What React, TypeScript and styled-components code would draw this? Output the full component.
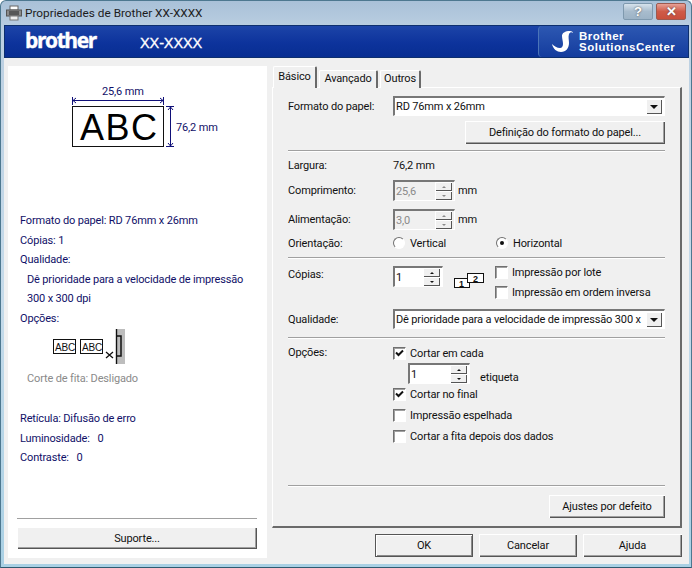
import React from "react";
import styled, { createGlobalStyle } from "styled-components";

const GlobalStyle = createGlobalStyle`
  html, body {
    margin: 0;
    padding: 0;
    background: #fff;
  }
  * {
    box-sizing: border-box;
  }
`;

const Window = styled.div`
  width: 692px;
  height: 568px;
  display: flex;
  flex-direction: column;
  padding: 0 3px 3px;
  overflow: hidden;
  border-radius: 6px 6px 0 0;
  border: 1px solid #4d7890;
  border-bottom-color: #2f5a70;
  background: linear-gradient(#a9c1d8 0, #bcd0e2 30px, #c6dbea 300px, #a9d0e4 100%);
  font-family: Roboto, "Liberation Sans", sans-serif;
  font-size: 11px;
  letter-spacing: -0.15px;
  color: #111;
`;

const TitleBar = styled.div`
  height: 24px;
  flex: none;
  display: flex;
  align-items: center;
  gap: 3px;
  padding: 0 2px;
  font-size: 11.8px;
  letter-spacing: 0;
  color: #1c1c1c;
`;

const TitleText = styled.span`
  flex: 1;
`;

const CaptionButton = styled.div<{ $close?: boolean }>`
  width: 30px;
  height: 17px;
  margin-top: -4px;
  display: flex;
  align-items: center;
  justify-content: center;
  border: 1px solid ${(p) => (p.$close ? "#9c5a50" : "#7f99ae")};
  border-radius: 2px;
  font-family: "Liberation Sans", sans-serif;
  font-weight: 700;
  font-size: 13px;
  color: #fff;
  text-shadow: 0 0 2px #444;
  background: ${(p) =>
    p.$close
      ? "linear-gradient(#e8a196, #cf5b48 50%, #c9503c)"
      : "linear-gradient(#d6e2ec, #a8bccd 50%, #9db3c6)"};
`;

const Banner = styled.div`
  height: 33px;
  flex: none;
  margin: 0 -1px 0 0;
  display: flex;
  align-items: center;
  padding-left: 20px;
  border: 1px solid #0d2f6e;
  background: linear-gradient(#1c44a8, #0d339c 55%, #082e92);
  color: #fff;
`;

const Logo = styled.span`
  width: 94px;
  margin-top: -3px;
  font-family: "Open Sans", sans-serif;
  font-weight: 700;
  font-size: 21px;
  letter-spacing: -1.4px;
  -webkit-text-stroke: 0.4px #fff;
`;

const Model = styled.span`
  flex: 1;
  padding: 2px 0 0 21px;
  font-family: "Liberation Sans", sans-serif;
  font-size: 14.5px;
  letter-spacing: -0.1px;
  -webkit-text-stroke: 0.3px #fff;
`;

const SolutionsLink = styled.div`
  width: 150px;
  height: 31px;
  display: flex;
  align-items: center;
  gap: 4px;
  padding-left: 11px;
  border-left: 1px solid #4b74b8;
  border-radius: 4px 0 0 4px;
  background: linear-gradient(#2d58b2, #143c9e);
`;

const SolutionsText = styled.div`
  font-family: "Liberation Sans", sans-serif;
  font-weight: 700;
  font-size: 11.5px;
  line-height: 11px;
  letter-spacing: 0.5px;
`;

const Body = styled.div`
  flex: 1;
  min-height: 0;
  display: flex;
  gap: 5px;
  padding: 8px 7px 6px 4px;
  margin-right: -1px;
  background: #f0f0f0;
`;

const Sidebar = styled.aside`
  width: 259px;
  flex: none;
  display: flex;
  flex-direction: column;
  padding: 0 10px 9px 9px;
  background: #fff;
`;

const DiagramWrap = styled.div`
  height: 145px;
  flex: none;
`;

const SummaryLine = styled.div<{ $indent?: boolean; $muted?: boolean }>`
  height: 19.6px;
  line-height: 19.6px;
  padding-left: ${(p) => (p.$muted || p.$indent ? "10px" : "3px")};
  color: ${(p) => (p.$muted ? "#8a8a8a" : "#101068")};
  white-space: pre;
`;

const CutterWrap = styled.div`
  height: 40px;
  padding-left: 35px;
`;

const SummaryGap = styled.div`
  height: 21px;
`;

const SidebarFoot = styled.div`
  margin-top: auto;
  display: flex;
  flex-direction: column;
  gap: 7px;
`;

const Rule = styled.hr<{ $top?: number }>`
  height: 2px;
  width: 100%;
  flex: none;
  margin: ${(p) => p.$top ?? 0}px 0 0;
  border: 0;
  border-top: 1px solid #a0a0a0;
  border-bottom: 1px solid #fff;
`;

const Button = styled.button<{ $width?: number; $default?: boolean; $height?: number }>`
  width: ${(p) => (p.$width ? `${p.$width}px` : "100%")};
  height: ${(p) => p.$height ?? 23}px;
  flex: none;
  padding: 0;
  font: inherit;
  letter-spacing: inherit;
  color: #111;
  background: #f0f0f0;
  border: 0;
  box-shadow: ${(p) =>
    p.$default
      ? "inset 0 0 0 1px #555, inset 2px 2px 0 #fff, inset -2px -2px 0 #8a8a8a"
      : "inset 1px 1px 0 #fff, inset -1px -1px 0 #555, inset -2px -2px 0 #a0a0a0"};
`;

const Main = styled.main`
  flex: 1;
  min-width: 0;
  display: flex;
  flex-direction: column;
`;

const TabStrip = styled.div`
  height: 22px;
  flex: none;
  display: flex;
  align-items: flex-end;
  padding-left: 1px;
  gap: 2px;
  margin-bottom: -1px;
  position: relative;
  z-index: 1;
`;

const Tab = styled.div<{ $active?: boolean; $width: number }>`
  width: ${(p) => p.$width}px;
  height: ${(p) => (p.$active ? 22 : 18)}px;
  line-height: ${(p) => (p.$active ? 19 : 16)}px;
  text-align: center;
  background: #f0f0f0;
  border-left: 1px solid #fff;
  border-top: 1px solid #fff;
  border-right: 2px solid #6a6a6a;
  border-radius: 2px 2px 0 0;
`;

const Pane = styled.section`
  height: 441px;
  flex: none;
  display: flex;
  flex-direction: column;
  padding: 8px 15px 0 15px;
  border-top: 1px solid #fff;
  border-left: 1px solid #fff;
  border-right: 2px solid #6a6a6a;
  border-bottom: 2px solid #6a6a6a;
  background: #f0f0f0;
`;

const Row = styled.div<{ $top?: number; $height?: number; $align?: string }>`
  display: grid;
  grid-template-columns: 105px minmax(0, 1fr);
  align-items: ${(p) => p.$align ?? "center"};
  margin-top: ${(p) => p.$top ?? 0}px;
  height: ${(p) => p.$height ?? 14}px;
  flex: none;
`;

const Inline = styled.div<{ $gap?: number }>`
  display: flex;
  align-items: center;
  gap: ${(p) => p.$gap ?? 3}px;
`;

const Sunken = styled.div<{ $width?: number; $height: number; $disabled?: boolean }>`
  width: ${(p) => (p.$width ? `${p.$width}px` : "100%")};
  height: ${(p) => p.$height}px;
  flex: none;
  display: flex;
  align-items: center;
  padding: 0 2px 0 1px;
  color: ${(p) => (p.$disabled ? "#8a8a8a" : "#111")};
  background: ${(p) => (p.$disabled ? "#f0f0f0" : "#fff")};
  border-top: 2px solid #777;
  border-left: 2px solid #777;
  border-right: 1px solid #fff;
  border-bottom: 1px solid #fff;
`;

const Value = styled.span`
  flex: 1;
  min-width: 0;
  white-space: nowrap;
  overflow: hidden;
`;

const Raised = styled.div`
  display: flex;
  align-items: center;
  justify-content: center;
  background: #f0f0f0;
  box-shadow: inset 1px 1px 0 #fff, inset -1px -1px 0 #555;
`;

const DropButton = styled(Raised)`
  width: 16px;
  height: 15px;
  flex: none;
`;

const SpinColumn = styled.div`
  width: 17px;
  flex: none;
  display: flex;
  flex-direction: column;
  align-self: stretch;
`;

const SpinButton = styled(Raised)`
  flex: 1;
`;

const Arrow = styled.i<{ $up?: boolean; $size?: number; $color?: string }>`
  display: block;
  width: 0;
  height: 0;
  border-left: ${(p) => p.$size ?? 2}px solid transparent;
  border-right: ${(p) => p.$size ?? 2}px solid transparent;
  ${(p) => (p.$up ? "border-bottom" : "border-top")}: ${(p) => p.$size ?? 2}px solid
    ${(p) => p.$color ?? "#111"};
`;

const CheckRow = styled.div<{ $top?: number }>`
  display: flex;
  align-items: center;
  gap: 4px;
  height: 14px;
  margin-top: ${(p) => p.$top ?? 0}px;
`;

const Box = styled.span`
  width: 13px;
  height: 13px;
  flex: none;
  display: flex;
  background: #fff;
  border-top: 1px solid #707070;
  border-left: 1px solid #707070;
  border-right: 1px solid #fff;
  border-bottom: 1px solid #fff;
  box-shadow: inset 1px 1px 0 #a0a0a0;
`;

const RadioDot = styled.span<{ $on?: boolean }>`
  width: 12px;
  height: 12px;
  flex: none;
  display: flex;
  align-items: center;
  justify-content: center;
  border-radius: 50%;
  background: #fff;
  border: 1px solid;
  border-color: #707070 #fff #fff #707070;
  &::after {
    content: "";
    width: 4px;
    height: 4px;
    border-radius: 50%;
    background: ${(p) => (p.$on ? "#111" : "transparent")};
  }
`;

const RadioGroup = styled.div`
  display: grid;
  grid-template-columns: 103px 1fr;
  & > div {
    gap: 5px;
  }
`;

const PaneButtonWrap = styled.div`
  display: flex;
  justify-content: flex-end;
  margin-top: 5px;
`;

const PaneFoot = styled.div`
  margin-top: auto;
  padding-bottom: 8px;
  display: flex;
  flex-direction: column;
  align-items: flex-end;
  gap: 8px;
`;

const Footer = styled.footer`
  display: flex;
  justify-content: flex-end;
  gap: 6px;
  margin-top: 6px;
`;

const Field = styled.div`
  display: flex;
  flex-direction: column;
`;

const CopiesLabel = styled.span`
  padding-top: 2px;
`;

const CopiesBody = styled.div`
  display: flex;
  align-items: flex-start;
`;

const CopyChecks = styled.div`
  display: flex;
  flex-direction: column;
  margin-top: -1px;
  padding-left: 11px;
`;

const StackIcon = styled.svg`
  margin: 5px 0 0 10px;
  flex: none;
`;

const CutEveryRow = styled(Inline)`
  margin: 3px 0 0 15px;
  align-items: flex-end;
`;

const CheckMark = () => (
  <svg width="11" height="11" viewBox="0 0 11 11">
    <path d="M2 4.5 L4.5 7 L9 2.5" fill="none" stroke="#111" strokeWidth="2" />
  </svg>
);

const Check = ({ on, top, children }: { on?: boolean; top?: number; children: React.ReactNode }) => (
  <CheckRow $top={top}>
    <Box>{on && <CheckMark />}</Box>
    <span>{children}</span>
  </CheckRow>
);

const Spin = ({
  width,
  height,
  value,
  disabled,
}: {
  width: number;
  height: number;
  value: string;
  disabled?: boolean;
}) => (
  <Sunken $width={width} $height={height} $disabled={disabled}>
    <Value>{value}</Value>
    <SpinColumn>
      <SpinButton>
        <Arrow $up $color={disabled ? "#8a8a8a" : "#111"} />
      </SpinButton>
      <SpinButton>
        <Arrow $color={disabled ? "#8a8a8a" : "#111"} />
      </SpinButton>
    </SpinColumn>
  </Sunken>
);

const Select = ({ value }: { value: string }) => (
  <Sunken $height={20}>
    <Value>{value}</Value>
    <DropButton>
      <Arrow $size={4} />
    </DropButton>
  </Sunken>
);

// tape with its width and height dimension lines
const TapeDiagram = () => (
  <svg width="240" height="145" viewBox="0 0 240 145">
    <g stroke="#101078" fill="none">
      <path d="M55.5 31v8M146.5 31v8M56 34.5h90M59 32l-3 2.5 3 2.5M143 32l3 2.5-3 2.5" />
      <path d="M149 40.5h8M149 80.5h8M153.5 41v39M151 44l2.5-3 2.5 3M151 77l2.5 3 2.5-3" />
    </g>
    <text x="85" y="29" fontFamily="Roboto" fontSize="11" fill="#101068">
      25,6 mm
    </text>
    <text x="159" y="65" fontFamily="Roboto" fontSize="11" fill="#101068">
      76,2 mm
    </text>
    <rect x="55.5" y="40.5" width="91" height="40" fill="#fff" stroke="#111" />
    <text x="63" y="74" fontFamily="Liberation Sans" fontSize="36" fill="#000" letterSpacing="1.5">
      ABC
    </text>
  </svg>
);

// two small labels, the cut marker and the tape end
const CutterDiagram = () => (
  <svg width="90" height="40" viewBox="0 0 90 40">
    <rect x="65" y="0" width="8" height="35" fill="#bdbdbd" />
    <path d="M64.5 0v35" stroke="#111" strokeWidth="1.4" />
    <path d="M65 7h4v20h-4" fill="none" stroke="#111" strokeWidth="1.5" />
    <rect x="1.5" y="10.5" width="22" height="14" fill="#fff" stroke="#111" />
    <rect x="28.5" y="10.5" width="22" height="14" fill="#fff" stroke="#111" />
    <text x="3" y="21.5" fontFamily="Liberation Sans" fontSize="10" fill="#111">
      ABC
    </text>
    <text x="30" y="21.5" fontFamily="Liberation Sans" fontSize="10" fill="#111">
      ABC
    </text>
    <path d="M54 23l7 6M54 29l7-6" stroke="#111" strokeWidth="1.3" fill="none" />
  </svg>
);

const SwanIcon = () => (
  <svg width="25" height="24" viewBox="0 0 25 24">
    <path
      d="M20 1c2 0 3 1 3 2-1-1-3-1-4 1-1 3 0 6 0 9 0 5-3 9-8 9-4 0-8-3-9-8 2 2 5 4 8 4 2 0 3-2 3-4 0-3-1-5-1-8 0-3 3-5 8-5z"
      fill="#fff"
    />
  </svg>
);

const PrinterIcon = () => (
  <svg width="16" height="16" viewBox="0 0 16 16">
    <rect x="4" y="1" width="8" height="4" fill="#fff" stroke="#666" />
    <rect x="0.5" y="5" width="15" height="6" fill="#8c8c8c" stroke="#555" />
    <path d="M3 7h10M3 9h10" stroke="#222" />
    <rect x="4" y="11" width="8" height="4" fill="#eee" stroke="#777" />
  </svg>
);

export default function App() {
  return (
    <>
      <GlobalStyle />
      <Window>
        <TitleBar>
          <PrinterIcon />
          <TitleText>Propriedades de Brother XX-XXXX</TitleText>
          <CaptionButton>?</CaptionButton>
          <CaptionButton $close>✕</CaptionButton>
        </TitleBar>
        <Banner>
          <Logo>brother</Logo>
          <Model>XX-XXXX</Model>
          <SolutionsLink>
            <SwanIcon />
            <SolutionsText>
              Brother
              <br />
              SolutionsCenter
            </SolutionsText>
          </SolutionsLink>
        </Banner>
        <Body>
          <Sidebar>
            <DiagramWrap>
              <TapeDiagram />
            </DiagramWrap>
            <SummaryLine>Formato do papel: RD 76mm x 26mm</SummaryLine>
            <SummaryLine>Cópias: 1</SummaryLine>
            <SummaryLine>Qualidade:</SummaryLine>
            <SummaryLine $indent>Dê prioridade para a velocidade de impressão</SummaryLine>
            <SummaryLine $indent>300 x 300 dpi</SummaryLine>
            <SummaryLine>Opções:</SummaryLine>
            <CutterWrap>
              <CutterDiagram />
            </CutterWrap>
            <SummaryLine $muted>Corte de fita: Desligado</SummaryLine>
            <SummaryGap />
            <SummaryLine>Retícula: Difusão de erro</SummaryLine>
            <SummaryLine>Luminosidade:   0</SummaryLine>
            <SummaryLine>Contraste:   0</SummaryLine>
            <SidebarFoot>
              <Rule />
              <Button $height={22}>Suporte...</Button>
            </SidebarFoot>
          </Sidebar>
          <Main>
            <TabStrip>
              <Tab $active $width={44}>
                Básico
              </Tab>
              <Tab $width={59}>Avançado</Tab>
              <Tab $width={41}>Outros</Tab>
            </TabStrip>
            <Pane>
              <Row $height={20}>
                <span>Formato do papel:</span>
                <Select value="RD 76mm x 26mm" />
              </Row>
              <PaneButtonWrap>
                <Button $width={200}>Definição do formato do papel...</Button>
              </PaneButtonWrap>
              <Rule $top={6} />
              <Row $top={6}>
                <span>Largura:</span>
                <span>76,2 mm</span>
              </Row>
              <Row $top={8} $height={21}>
                <span>Comprimento:</span>
                <Inline>
                  <Spin width={62} height={21} value="25,6" disabled />
                  <span>mm</span>
                </Inline>
              </Row>
              <Row $top={8} $height={21}>
                <span>Alimentação:</span>
                <Inline>
                  <Spin width={62} height={21} value="3,0" disabled />
                  <span>mm</span>
                </Inline>
              </Row>
              <Row $top={6}>
                <span>Orientação:</span>
                <RadioGroup>
                  <Inline>
                    <RadioDot />
                    <span>Vertical</span>
                  </Inline>
                  <Inline>
                    <RadioDot $on />
                    <span>Horizontal</span>
                  </Inline>
                </RadioGroup>
              </Row>
              <Rule $top={7} />
              <Row $top={7} $height={43} $align="start">
                <CopiesLabel>Cópias:</CopiesLabel>
                <CopiesBody>
                  <Spin width={50} height={21} value="1" />
                  <StackIcon width="31" height="18" viewBox="0 0 31 18">
                    <rect x="1.5" y="7.5" width="15" height="9" fill="#fff" stroke="#111" />
                    <rect x="14.5" y="2.5" width="16" height="9" fill="#fff" stroke="#111" />
                    <text x="6" y="15.5" fontFamily="Liberation Sans" fontSize="9" fontWeight="700" fill="#111">
                      1
                    </text>
                    <text x="20" y="10.5" fontFamily="Liberation Sans" fontSize="9" fontWeight="700" fill="#111">
                      2
                    </text>
                  </StackIcon>
                  <CopyChecks>
                    <Check>Impressão por lote</Check>
                    <Check top={6}>Impressão em ordem inversa</Check>
                  </CopyChecks>
                </CopiesBody>
              </Row>
              <Row $height={20}>
                <span>Qualidade:</span>
                <Select value="Dê prioridade para a velocidade de impressão 300 x" />
              </Row>
              <Rule $top={8} />
              <Row $top={7} $height={98} $align="start">
                <span>Opções:</span>
                <Field>
                  <Check on>Cortar em cada</Check>
                  <CutEveryRow $gap={10}>
                    <Spin width={62} height={21} value="1" />
                    <span>etiqueta</span>
                  </CutEveryRow>
                  <Check on top={3}>
                    Cortar no final
                  </Check>
                  <Check top={7}>Impressão espelhada</Check>
                  <Check top={7}>Cortar a fita depois dos dados</Check>
                </Field>
              </Row>
              <PaneFoot>
                <Rule />
                <Button $width={116}>Ajustes por defeito</Button>
              </PaneFoot>
            </Pane>
            <Footer>
              <Button $width={98} $default>
                OK
              </Button>
              <Button $width={98}>Cancelar</Button>
              <Button $width={99}>Ajuda</Button>
            </Footer>
          </Main>
        </Body>
      </Window>
    </>
  );
}
